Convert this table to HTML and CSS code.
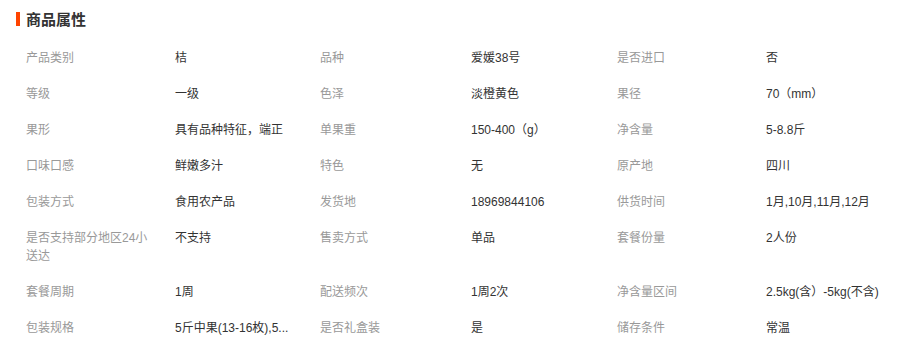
FILE: index.html
```html
<!DOCTYPE html>
<html lang="zh-CN">
<head>
<meta charset="utf-8">
<title>商品属性</title>
<link rel="stylesheet" href="styles.css">
</head>
<body>
<section class="attrs">
  <h2 class="attrs-title">商品属性</h2>
  <div class="attrs-grid">
    <div class="lbl">产品类别</div><div class="val">桔</div>
    <div class="lbl">品种</div><div class="val">爱媛38号</div>
    <div class="lbl">是否进口</div><div class="val">否</div>

    <div class="lbl">等级</div><div class="val">一级</div>
    <div class="lbl">色泽</div><div class="val">淡橙黄色</div>
    <div class="lbl">果径</div><div class="val">70（mm）</div>

    <div class="lbl">果形</div><div class="val">具有品种特征，端正</div>
    <div class="lbl">单果重</div><div class="val">150-400（g）</div>
    <div class="lbl">净含量</div><div class="val">5-8.8斤</div>

    <div class="lbl">口味口感</div><div class="val">鲜嫩多汁</div>
    <div class="lbl">特色</div><div class="val">无</div>
    <div class="lbl">原产地</div><div class="val">四川</div>

    <div class="lbl">包装方式</div><div class="val">食用农产品</div>
    <div class="lbl">发货地</div><div class="val">18969844106</div>
    <div class="lbl">供货时间</div><div class="val">1月,10月,11月,12月</div>

    <div class="lbl">是否支持部分地区24小送达</div><div class="val">不支持</div>
    <div class="lbl">售卖方式</div><div class="val">单品</div>
    <div class="lbl">套餐份量</div><div class="val">2人份</div>

    <div class="lbl">套餐周期</div><div class="val">1周</div>
    <div class="lbl">配送频次</div><div class="val">1周2次</div>
    <div class="lbl">净含量区间</div><div class="val">2.5kg(含）-5kg(不含)</div>

    <div class="lbl">包装规格</div><div class="val">5斤中果(13-16枚),5...</div>
    <div class="lbl">是否礼盒装</div><div class="val">是</div>
    <div class="lbl">储存条件</div><div class="val">常温</div>
  </div>
</section>
</body>
</html>
```

FILE: styles.css
```css
html, body {
  margin: 0;
  padding: 0;
  background: #fff;
}

body {
  font-family: "Liberation Sans", "Noto Sans CJK SC", sans-serif;
  font-size: 12px;
  color: #333;
}

.attrs {
  width: 907px;
}

.attrs-title {
  margin: 0;
  height: 40px;
  display: flex;
  align-items: center;
  padding: 0 0 2px 16px;
  box-sizing: border-box;
  font-family: "Noto Sans CJK SC", sans-serif;
  font-size: 15px;
  font-weight: bold;
  color: #333;
  line-height: 20px;
}

.attrs-title::before {
  content: "";
  width: 4px;
  height: 14px;
  background: #ff4400;
  margin-right: 6px;
}

.attrs-grid {
  display: grid;
  grid-template-columns: 149px 145px 151px 146px 149px 141px;
  padding-left: 26px;
}

.lbl,
.val {
  padding: 9px 0;
  line-height: 18px;
}

.lbl {
  color: #999;
  padding-right: 20px;
}

.val {
  color: #333;
  padding-right: 20px;
  white-space: nowrap;
}
```
